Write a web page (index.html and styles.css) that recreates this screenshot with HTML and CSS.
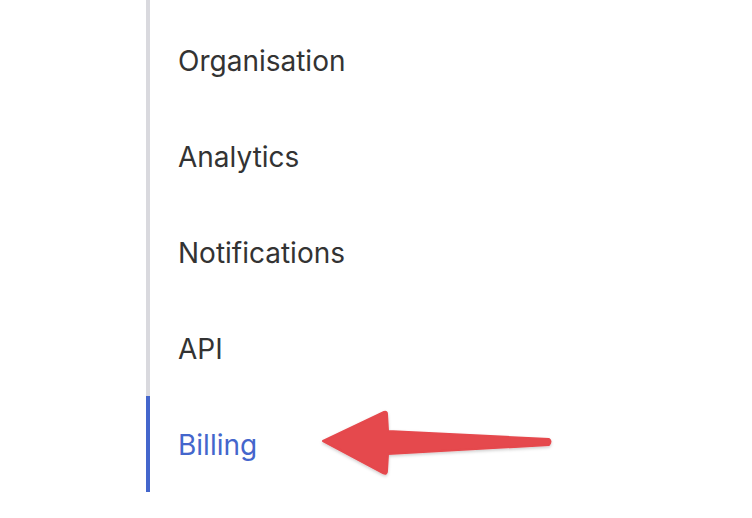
FILE: index.html
```html
<!DOCTYPE html>
<html>
<head>
    <title>Settings Menu</title>
    <link rel="stylesheet" href="styles.css">
</head>
<body>
    <nav class="side-menu">
        <a class="menu-item" href="#">Organisation</a>
        <a class="menu-item" href="#">Analytics</a>
        <a class="menu-item" href="#">Notifications</a>
        <a class="menu-item" href="#">API</a>
        <a class="menu-item active" href="#">Billing</a>
    </nav>
    <svg class="arrow" width="752" height="518" viewBox="0 0 752 518">
        <defs>
            <filter id="shadow" x="-10%" y="-30%" width="120%" height="160%">
                <feDropShadow dx="0" dy="1.5" stdDeviation="1.5" flood-color="#000" flood-opacity="0.2"/>
            </filter>
        </defs>
        <path d="M323 441 L384 412 Q387 411 387 414 L388 431 L549 439 Q552 441 549 445 L388 454 L387 471 Q387 475 383 473 Z"
              fill="#e5484d" stroke="#e5484d" stroke-width="2" stroke-linejoin="round" filter="url(#shadow)"/>
    </svg>
</body>
</html>
```

FILE: styles.css
```css
body {
    margin: 0;
    background-color: #fff;
    font-family: Inter, "Noto Sans", sans-serif;
}

.side-menu {
    display: flex;
    flex-direction: column;
    margin-left: 146px;
    padding-top: 12px;
    border-left: 4px solid #d9d9de;
    width: 400px;
}

.menu-item {
    display: flex;
    align-items: center;
    box-sizing: border-box;
    height: 96px;
    margin-left: -4px;
    padding-top: 2px;
    padding-left: 28px;
    border-left: 4px solid transparent;
    font-size: 28px;
    color: #333;
    text-decoration: none;
}

.menu-item.active {
    border-left-color: #4466cc;
    color: #4466cc;
}

.arrow {
    position: absolute;
    top: 0;
    left: 0;
}
```
